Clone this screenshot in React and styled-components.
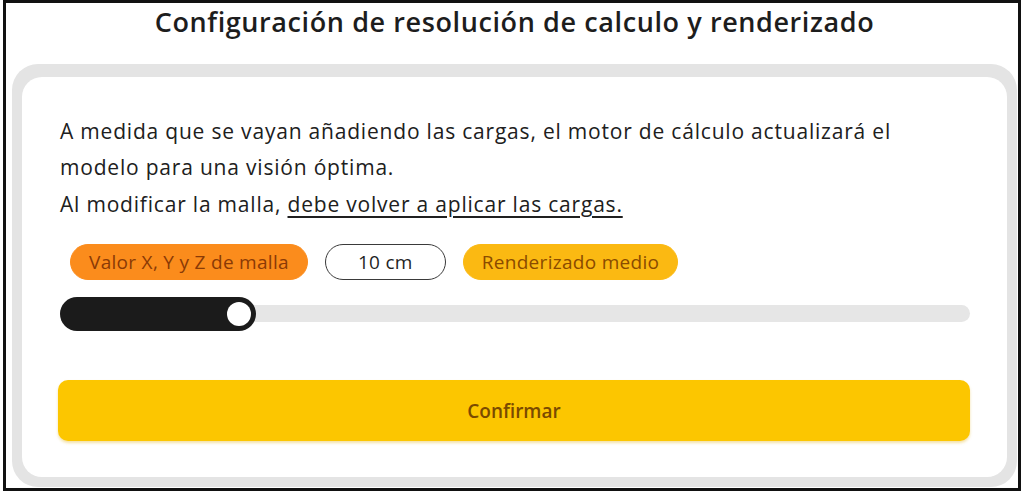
import React, { useState } from "react";
import styled, { createGlobalStyle } from "styled-components";

const GlobalStyle = createGlobalStyle`
  html, body {
    margin: 0;
    padding: 0;
    background: #ffffff;
  }
  body {
    font-family: "Open Sans", "Noto Sans", sans-serif;
    color: #1f1f1f;
  }
`;

export default function App() {
  const [value] = useState(21.5);

  return (
    <>
      <GlobalStyle />
      <Frame>
        <Title>Configuración de resolución de calculo y renderizado</Title>
        <Panel>
          <Card>
            <Text>
              A medida que se vayan añadiendo las cargas, el motor de cálculo actualizará el
              <br />
              modelo para una visión óptima.
              <br />
              Al modificar la malla, <Underline>debe volver a aplicar las cargas.</Underline>
            </Text>

            <PillRow>
              <Pill variant="orange">Valor X, Y y Z de malla</Pill>
              <Pill variant="outline">10 cm</Pill>
              <Pill variant="amber">Renderizado medio</Pill>
            </PillRow>

            <Track>
              <Fill style={{ width: `${value}%` }}>
                <Thumb />
              </Fill>
            </Track>

            <ConfirmButton>Confirmar</ConfirmButton>
          </Card>
        </Panel>
      </Frame>
    </>
  );
}

// Styles
const Frame = styled.div`
  box-sizing: border-box;
  width: 1018px;
  height: 491px;
  margin-left: 3px;
  border: 3px solid #111111;
  display: flex;
  flex-direction: column;
  padding: 0 1px 1px 6px;
`;

const Title = styled.h1`
  margin: 0;
  padding-top: 1px;
  height: 61px;
  box-sizing: border-box;
  text-align: center;
  font-size: 27px;
  line-height: 36px;
  letter-spacing: 0.6px;
  font-weight: 600;
  color: #1d1d1d;
`;

const Panel = styled.div`
  flex: 1;
  background: #e4e4e4;
  border-radius: 26px;
  padding: 13px 10px 10px 10px;
  display: flex;
`;

const Card = styled.div`
  flex: 1;
  background: #ffffff;
  border-radius: 20px;
  padding: 36px 37px 36px 38px;
  display: flex;
  flex-direction: column;
`;

const Text = styled.p`
  margin: 0;
  font-size: 21px;
  line-height: 36.5px;
  letter-spacing: 0.8px;
  color: #202020;
  white-space: nowrap;
`;

const Underline = styled.span`
  text-decoration: underline;
  text-underline-offset: 4px;
`;

const PillRow = styled.div`
  display: flex;
  gap: 17px;
  margin: 22px 0 0 10px;
`;

const pillColors = {
  orange: { bg: "#fb8c1c", fg: "#8a3a06", border: "#fb8c1c" },
  outline: { bg: "#ffffff", fg: "#1f1f1f", border: "#3a3a3a" },
  amber: { bg: "#fbb912", fg: "#8a4b00", border: "#fbb912" },
};

const Pill = styled.span`
  box-sizing: border-box;
  height: 36px;
  display: inline-flex;
  align-items: center;
  justify-content: center;
  padding: 0 ${(p) => (p.variant === "outline" ? "32px" : "18px")};
  border-radius: 18px;
  font-size: 19px;
  letter-spacing: 0.3px;
  background: ${(p) => pillColors[p.variant].bg};
  color: ${(p) => pillColors[p.variant].fg};
  border: 1px solid ${(p) => pillColors[p.variant].border};
`;

const Track = styled.div`
  position: relative;
  height: 17px;
  margin-top: 25px;
  border-radius: 9px;
  background: #e6e6e6;
`;

const Fill = styled.div`
  position: absolute;
  left: 0;
  top: -8px;
  height: 34px;
  box-sizing: border-box;
  border-radius: 17px;
  background: #1b1b1b;
  display: flex;
  align-items: center;
  justify-content: flex-end;
  padding-right: 5px;
`;

const Thumb = styled.div`
  width: 24px;
  height: 24px;
  border-radius: 50%;
  background: #ffffff;
`;

const ConfirmButton = styled.button`
  all: unset;
  box-sizing: border-box;
  margin-top: 58px;
  height: 61px;
  margin-left: -2px;
  border-radius: 10px;
  background: #fcc600;
  box-shadow: 0 2px 3px rgba(220, 170, 0, 0.35);
  display: flex;
  align-items: center;
  justify-content: center;
  font-family: "Open Sans", "Noto Sans", sans-serif;
  font-size: 19px;
  font-weight: 600;
  color: #7a4a00;
  cursor: pointer;
`;
